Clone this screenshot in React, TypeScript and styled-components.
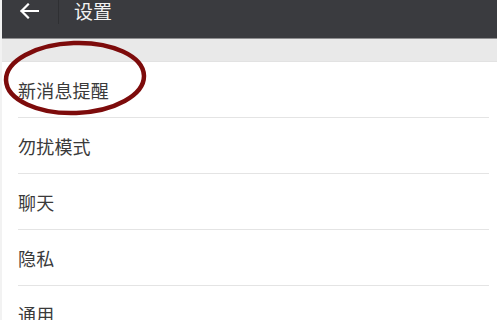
import React from "react";
import styled, { createGlobalStyle } from "styled-components";

const Global = createGlobalStyle`
  html, body { margin: 0; padding: 0; background: #ffffff; }
  body { font-family: "Noto Sans CJK SC", "Noto Sans", sans-serif; overflow: hidden; }
`;

const Page = styled.div`
  position: relative;
  width: 497px;
  height: 320px;
  overflow: hidden;
  background: #ffffff;
  border-left: 2px solid #f2f2f2;
  box-sizing: border-box;
`;

const Toolbar = styled.div`
  height: 38px;
  background: #3a3b3f;
  border-bottom: 1px solid #8e8e90;
  display: flex;
  align-items: flex-start;
  box-sizing: content-box;
  margin-left: -2px;
`;

const BackButton = styled.div`
  width: 58px;
  height: 24px;
  display: flex;
  align-items: center;
  justify-content: center;
  margin-top: -1px;
`;

const Divider = styled.div`
  width: 1px;
  height: 24px;
  background: #2f3033;
`;

const Title = styled.div`
  margin-left: 15px;
  margin-top: -3px;
  font-size: 19px;
  line-height: 28px;
  color: #f2f2f2;
`;

const Band = styled.div`
  height: 22px;
  background: #e9e9e9;
  border-bottom: 1px solid #e2e2e2;
  margin-left: -2px;
`;

const List = styled.div`
  display: flex;
  flex-direction: column;
`;

const Row = styled.div`
  height: 55px;
  margin-left: 16px;
  margin-right: 8px;
  border-bottom: 1px solid #e4e4e4;
  display: flex;
  align-items: center;
  font-size: 18px;
  color: #3a3a3a;
  letter-spacing: 0.2px;
`;

const Mark = styled.svg`
  position: absolute;
  left: 0;
  top: 40px;
`;

const items = ["新消息提醒", "勿扰模式", "聊天", "隐私", "通用"];

export default function App() {
  return (
    <>
      <Global />
      <Page>
        <Toolbar>
          <BackButton>
            <svg width="20" height="16" viewBox="0 0 20 16">
              <path
                d="M19 8H2.5M9 1.5L2.5 8L9 14.5"
                stroke="#ffffff"
                strokeWidth="2.2"
                fill="none"
                strokeLinecap="square"
              />
            </svg>
          </BackButton>
          <Divider />
          <Title>设置</Title>
        </Toolbar>
        <Band />
        <List>
          {items.map((t) => (
            <Row key={t}>{t}</Row>
          ))}
        </List>
        <Mark width="152" height="80" viewBox="0 0 152 80">
          <ellipse
            cx="73"
            cy="38"
            rx="69"
            ry="35"
            fill="none"
            stroke="#7d0b0b"
            strokeWidth="4.5"
            transform="rotate(-2 73 38)"
          />
        </Mark>
      </Page>
    </>
  );
}
